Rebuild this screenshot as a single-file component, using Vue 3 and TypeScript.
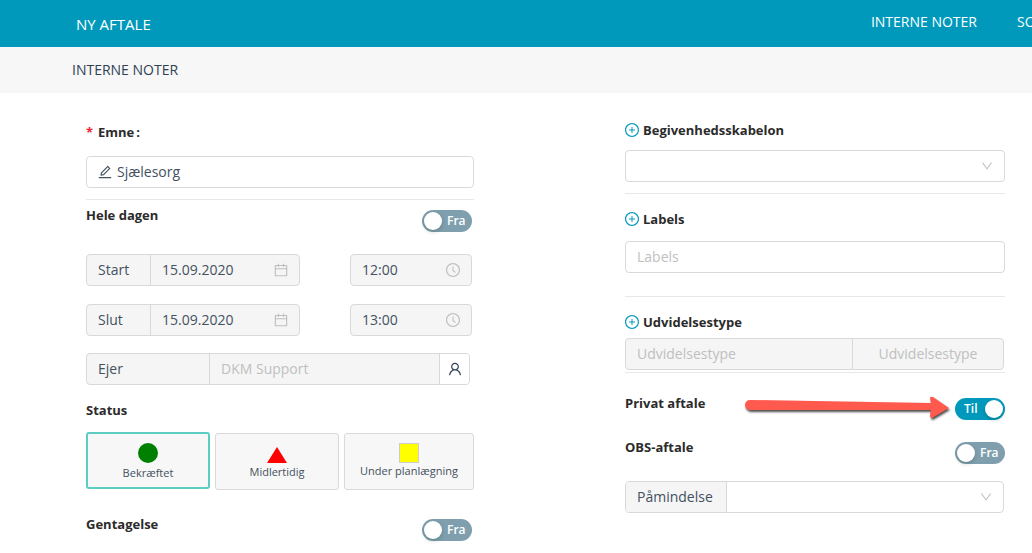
<script setup lang="ts">
import { h, reactive, ref } from 'vue'

type IconName = 'edit' | 'calendar' | 'clock' | 'user' | 'plus' | 'down'

const ring =
  'M512 64C264.6 64 64 264.6 64 512s200.6 448 448 448 448-200.6 448-448S759.4 64 512 64zm0 820c-205.4 0-372-166.6-372-372s166.6-372 372-372 372 166.6 372 372-166.6 372-372 372z'

const paths: Record<IconName, string[]> = {
  edit: [
    'M257.7 752c2 0 4-.2 6-.5L431.9 722c2-.4 3.9-1.3 5.3-2.8l423.9-423.9a9.96 9.96 0 0 0 0-14.1L694.9 114.9c-1.9-1.9-4.4-2.9-7.1-2.9s-5.2 1-7.1 2.9L256.8 538.8c-1.5 1.5-2.4 3.3-2.8 5.3l-29.5 168.2a33.5 33.5 0 0 0 9.4 29.8c6.6 6.4 14.9 9.9 23.8 9.9zm67.4-174.4L687.8 215l73.3 73.3-362.7 362.6-88.9 15.7 15.6-89zM880 836H144c-17.7 0-32 14.3-32 32v36c0 4.4 3.6 8 8 8h784c4.4 0 8-3.6 8-8v-36c0-17.7-14.3-32-32-32z',
  ],
  calendar: [
    'M880 184H712v-64c0-4.4-3.6-8-8-8h-56c-4.4 0-8 3.6-8 8v64H384v-64c0-4.4-3.6-8-8-8h-56c-4.4 0-8 3.6-8 8v64H144c-17.7 0-32 14.3-32 32v664c0 17.7 14.3 32 32 32h736c17.7 0 32-14.3 32-32V216c0-17.7-14.3-32-32-32zm-40 656H184V460h656v380zM184 392V256h128v48c0 4.4 3.6 8 8 8h56c4.4 0 8-3.6 8-8v-48h256v48c0 4.4 3.6 8 8 8h56c4.4 0 8-3.6 8-8v-48h128v136H184z',
  ],
  clock: [
    ring,
    'M686.7 638.6L544.1 535.5V288c0-4.4-3.6-8-8-8H488c-4.4 0-8 3.6-8 8v275.4c0 2.6 1.2 5 3.3 6.5l165.4 120.6c3.6 2.6 8.6 1.8 11.2-1.7l28.6-39c2.6-3.7 1.8-8.7-1.8-11.2z',
  ],
  user: [
    'M858.5 763.6a374 374 0 0 0-80.6-119.5 375.63 375.63 0 0 0-119.5-80.6c-.4-.2-.8-.3-1.2-.5C719.5 518 760 444.7 760 362c0-137-111-248-248-248S264 225 264 362c0 82.7 40.5 156 102.8 201.1-.4.2-.8.3-1.2.5-44.8 18.9-85 46-119.5 80.6a375.63 375.63 0 0 0-80.6 119.5A371.7 371.7 0 0 0 136 901.8a8 8 0 0 0 8 8.2h60c4.4 0 7.9-3.5 8-7.8 2-77.2 33-149.5 87.8-204.3 56.7-56.7 132-87.9 212.2-87.9s155.5 31.2 212.2 87.9C779 752.7 810 825 812 902.2c.1 4.4 3.6 7.8 8 7.8h60a8 8 0 0 0 8-8.2c-1-47.8-10.9-94.3-29.5-138.2zM512 534c-45.9 0-89.1-17.9-121.6-50.4S340 407.9 340 362c0-45.9 17.9-89.1 50.4-121.6S466.1 190 512 190s89.1 17.9 121.6 50.4S684 316.1 684 362c0 45.9-17.9 89.1-50.4 121.6S557.9 534 512 534z',
  ],
  plus: [
    ring,
    'M696 480H544V328c0-4.4-3.6-8-8-8h-48c-4.4 0-8 3.6-8 8v152H328c-4.4 0-8 3.6-8 8v48c0 4.4 3.6 8 8 8h152v152c0 4.4 3.6 8 8 8h48c4.4 0 8-3.6 8-8V544h152c4.4 0 8-3.6 8-8v-48c0-4.4-3.6-8-8-8z',
  ],
  down: [
    'M884 256h-75c-5.1 0-9.9 2.5-12.9 6.6L512 654.2 227.9 262.6c-3-4.1-7.8-6.6-12.9-6.6h-75c-6.5 0-10.3 7.4-6.5 12.7l352.6 486.1c12.8 17.6 39 17.6 51.7 0l352.6-486.1c3.9-5.3.1-12.7-6.4-12.7z',
  ],
}

const Icon = (props: { name: IconName }) =>
  h(
    'svg',
    { viewBox: '64 64 896 896', fill: 'currentColor', 'aria-hidden': 'true' },
    paths[props.name].map((d) => h('path', { d })),
  )
Icon.props = ['name']

const subject = ref('Sjælesorg')
const labels = ref('')
const status = ref('confirmed')
const flags = reactive({ allDay: false, repeat: false, isPrivate: true, obs: false })

const times = [
  { id: 'start', label: 'Start', date: '15.09.2020', time: '12:00' },
  { id: 'end', label: 'Slut', date: '15.09.2020', time: '13:00' },
]

const statuses = [
  { id: 'confirmed', label: 'Bekræftet', shape: 'circle' },
  { id: 'tentative', label: 'Midlertidig', shape: 'triangle' },
  { id: 'planning', label: 'Under planlægning', shape: 'square' },
]
</script>

<template>
  <div class="page">
    <header class="topbar">
      <h1>NY AFTALE</h1>
      <nav>
        <a href="#interne-noter">INTERNE NOTER</a>
        <a class="cut" href="#so">SO</a>
      </nav>
    </header>
    <div class="subbar"><h2>INTERNE NOTER</h2></div>

    <form class="form" @submit.prevent>
      <section class="col">
        <label class="title required" for="subject"><span class="star">*</span>Emne<span class="colon">:</span></label>
        <div class="box subject">
          <Icon class="icon-edit" name="edit" />
          <input id="subject" v-model="subject" type="text" />
        </div>
        <hr />
        <div class="row all-day">
          <label class="title" for="all-day">Hele dagen</label>
          <label class="switch" :class="{ on: flags.allDay }">
            <input id="all-day" v-model="flags.allDay" type="checkbox" role="switch" />
            <span>{{ flags.allDay ? 'Til' : 'Fra' }}</span>
          </label>
        </div>

        <div v-for="t in times" :key="t.id" class="when">
          <div class="box off">
            <label class="addon when-label" :for="t.id + '-date'">{{ t.label }}</label>
            <input :id="t.id + '-date'" type="text" :value="t.date" disabled />
            <Icon class="icon-field" name="calendar" />
          </div>
          <div class="box off">
            <input type="text" :value="t.time" :aria-label="t.label + ' tid'" disabled />
            <Icon class="icon-field" name="clock" />
          </div>
        </div>

        <div class="box off owner">
          <label class="addon owner-label" for="owner">Ejer</label>
          <input id="owner" type="text" placeholder="DKM Support" disabled />
          <button class="pick" type="button" aria-label="Ejer"><Icon name="user" /></button>
        </div>

        <fieldset class="status">
          <legend class="title">Status</legend>
          <div class="cards">
            <label v-for="s in statuses" :key="s.id" class="card" :class="[s.shape, { picked: status === s.id }]">
              <input v-model="status" type="radio" name="status" :value="s.id" />
              <span class="shape"></span>
              <span>{{ s.label }}</span>
            </label>
          </div>
        </fieldset>

        <div class="row">
          <label class="title" for="repeat">Gentagelse</label>
          <label class="switch" :class="{ on: flags.repeat }">
            <input id="repeat" v-model="flags.repeat" type="checkbox" role="switch" />
            <span>{{ flags.repeat ? 'Til' : 'Fra' }}</span>
          </label>
        </div>
      </section>

      <section class="col right">
        <label class="title plus" for="template"><Icon name="plus" />Begivenhedsskabelon</label>
        <div class="box template">
          <select id="template"><option value=""></option></select>
          <Icon class="icon-down" name="down" />
        </div>
        <hr />
        <label class="title plus labels-title" for="labels"><Icon name="plus" />Labels</label>
        <div class="box labels">
          <input id="labels" v-model="labels" type="text" placeholder="Labels" />
        </div>
        <hr />
        <label class="title plus type-title" for="type"><Icon name="plus" />Udvidelsestype</label>
        <div class="box off type">
          <input id="type" type="text" placeholder="Udvidelsestype" disabled />
          <button class="type-button" type="button" disabled>Udvidelsestype</button>
        </div>
        <hr />
        <div class="row private">
          <label class="title" for="private">Privat aftale</label>
          <svg class="arrow" viewBox="0 0 212 32" aria-hidden="true">
            <path d="M7 5 L188 8 L187 3 Q187 1 190 2 L206 13 L189 23 Q187 23 187 20 L188 15 L7 15 A5 5 0 0 1 7 5 Z" />
          </svg>
          <label class="switch" :class="{ on: flags.isPrivate }">
            <input id="private" v-model="flags.isPrivate" type="checkbox" role="switch" />
            <span>{{ flags.isPrivate ? 'Til' : 'Fra' }}</span>
          </label>
        </div>
        <div class="row obs">
          <label class="title" for="obs">OBS-aftale</label>
          <label class="switch" :class="{ on: flags.obs }">
            <input id="obs" v-model="flags.obs" type="checkbox" role="switch" />
            <span>{{ flags.obs ? 'Til' : 'Fra' }}</span>
          </label>
        </div>
        <div class="box reminder">
          <label class="addon reminder-label" for="reminder">Påmindelse</label>
          <select id="reminder"><option value=""></option></select>
          <Icon class="icon-down" name="down" />
        </div>
      </section>
    </form>
  </div>
</template>

<style>
body {
  margin: 0;
  background: #fff;
}
</style>

<style scoped>
.page {
  font-family: 'Open Sans', 'Noto Sans', sans-serif;
  font-size: 14px;
  line-height: 20px;
  color: #435160;
  overflow: hidden;
}
.page *,
.page *::before {
  box-sizing: border-box;
}
h1,
h2 {
  margin: 0;
  font-size: 14px;
  font-weight: 500;
}
.topbar {
  display: flex;
  align-items: center;
  justify-content: space-between;
  height: 47px;
  padding-left: 76px;
  background: #0099bc;
  color: #fff;
}
.topbar h1 {
  font-size: 15px;
  font-weight: 400;
}
nav {
  display: flex;
  gap: 40px;
  padding-bottom: 3px;
}
nav a {
  color: #fff;
  text-decoration: none;
  white-space: nowrap;
}
.cut {
  width: 15px;
}
.subbar {
  display: flex;
  align-items: center;
  height: 46px;
  padding-left: 72px;
  background: #f7f7f7;
}
.subbar h2 {
  color: #2f4054;
}
.form {
  display: grid;
  grid-template-columns: 388fr 380fr;
  gap: 151px;
  padding: 27px 27px 12px 86px;
}
.col {
  display: flex;
  flex-direction: column;
  min-width: 0;
}
.title {
  padding: 0;
  font-size: 13px;
  font-weight: 700;
  color: #2b2b2b;
}
.required {
  display: flex;
  margin: 2px 0 14px;
}
.star {
  width: 12px;
  color: #f5222d;
}
.colon {
  margin-left: 2px;
}
.box {
  display: flex;
  align-items: center;
  height: 32px;
  border: 1px solid #d9d9d9;
  border-radius: 4px;
  background: #fff;
}
.off {
  background: #f5f5f5;
}
.box input,
.box select {
  flex: 1;
  min-width: 0;
  width: 0;
  height: 30px;
  margin: 0;
  padding: 0 11px 2px;
  border: 0;
  outline: 0;
  appearance: none;
  background: transparent;
  font: inherit;
  color: #435160;
}
.box input::placeholder {
  color: #bfbfbf;
  opacity: 1;
}
.addon {
  flex: none;
  height: 30px;
  padding-left: 11px;
  border-right: 1px solid #d9d9d9;
  line-height: 30px;
}
.icon-edit {
  width: 14px;
  height: 14px;
  margin-left: 11px;
}
.box.subject input {
  padding-left: 5px;
}
.icon-field {
  width: 14px;
  height: 14px;
  margin-right: 11px;
  color: #bfbfbf;
}
.icon-down {
  width: 12px;
  height: 12px;
  margin-right: 11px;
  color: #bfbfbf;
}
hr {
  width: 100%;
  height: 1px;
  margin: 11px 0 0;
  border: 0;
  background: #e8e8e8;
}
.row {
  position: relative;
  display: flex;
  align-items: flex-start;
  justify-content: space-between;
}
.col:not(.right) .row {
  padding-right: 2px;
}
.all-day {
  margin: 5px 0 18px;
}
.switch {
  display: flex;
  align-items: center;
  width: 50px;
  height: 22px;
  margin-top: 5px;
  padding: 0 2px;
  border-radius: 11px;
  background: #7f9fae;
  color: #fff;
  font-size: 12px;
  font-weight: 600;
}
.switch span {
  flex: 1;
  padding-left: 5px;
}
.switch input {
  width: 18px;
  height: 18px;
  margin: 0;
  border-radius: 50%;
  appearance: none;
  background: #fff;
  box-shadow: 0 2px 4px rgba(0, 35, 11, 0.2);
}
.switch.on {
  flex-direction: row-reverse;
  background: #0099bc;
}
.switch.on span {
  padding-left: 7px;
}
.when {
  display: grid;
  grid-template-columns: 214fr 122fr;
  gap: 50px;
  margin: 4px 2px 14px 0;
}
.when-label {
  width: 64px;
}
.owner {
  margin: 3px 4px 0 0;
}
.owner-label {
  width: 123px;
}
.pick {
  display: flex;
  align-items: center;
  justify-content: center;
  width: 30px;
  height: 30px;
  padding: 0;
  border: 0;
  border-left: 1px solid #d9d9d9;
  border-radius: 0 3px 3px 0;
  background: #fff;
  color: #2f4054;
}
.pick svg {
  width: 14px;
  height: 14px;
}
.status {
  margin: 15px 0 24px;
  padding: 0;
  border: 0;
  min-width: 0;
}
.cards {
  display: grid;
  grid-template-columns: 124fr 124fr 130fr;
  gap: 5px;
  margin-top: 12px;
}
.card {
  position: relative;
  display: flex;
  flex-direction: column;
  align-items: center;
  height: 57px;
  margin-top: 1px;
  padding-top: 9px;
  border: 1px solid #d9d9d9;
  border-radius: 3px;
  background: #f7f7f7;
  font-size: 11px;
  line-height: 16px;
  white-space: nowrap;
}
.card.picked {
  margin: 0 0 1px;
  border: 2px solid #5bcdc3;
}
.card input {
  position: absolute;
  opacity: 0;
}
.shape {
  width: 20px;
  height: 20px;
}
.circle .shape {
  margin-bottom: 2px;
  border-radius: 50%;
  background: #008000;
}
.triangle .shape {
  height: 16px;
  margin: 4px 0 1px;
  background: #f00;
  clip-path: polygon(50% 0, 100% 100%, 0 100%);
}
.square .shape {
  border: 1px solid #ccc;
  background: #ff0;
}
.plus {
  display: flex;
  align-items: center;
  gap: 4px;
}
.plus svg {
  width: 14px;
  height: 14px;
  color: #0099bc;
}
.template {
  margin-top: 10px;
}
.labels-title {
  margin-top: 15px;
}
.labels {
  margin: 12px 0;
}
.labels + hr {
  margin-top: 11px;
}
.type-title {
  margin-top: 15px;
}
.type {
  margin: 6px 1px 0 0;
}
.type + hr {
  margin-top: 2px;
}
.type-button {
  width: 151px;
  height: 30px;
  padding: 0;
  border: 0;
  border-left: 1px solid #d9d9d9;
  background: transparent;
  font: inherit;
  color: #bfbfbf;
}
.private {
  margin-top: 20px;
}
.arrow {
  position: absolute;
  top: 2px;
  right: 50px;
  width: 212px;
  height: 32px;
  fill: #ff5a4d;
  filter: drop-shadow(1px 2px 1px rgba(0, 0, 0, 0.7));
}
.obs {
  margin-top: 17px;
}
.reminder {
  margin: 17px 1px 0 0;
}
.reminder-label {
  width: 101px;
  border-radius: 3px 0 0 3px;
  background: #f5f5f5;
}
</style>
